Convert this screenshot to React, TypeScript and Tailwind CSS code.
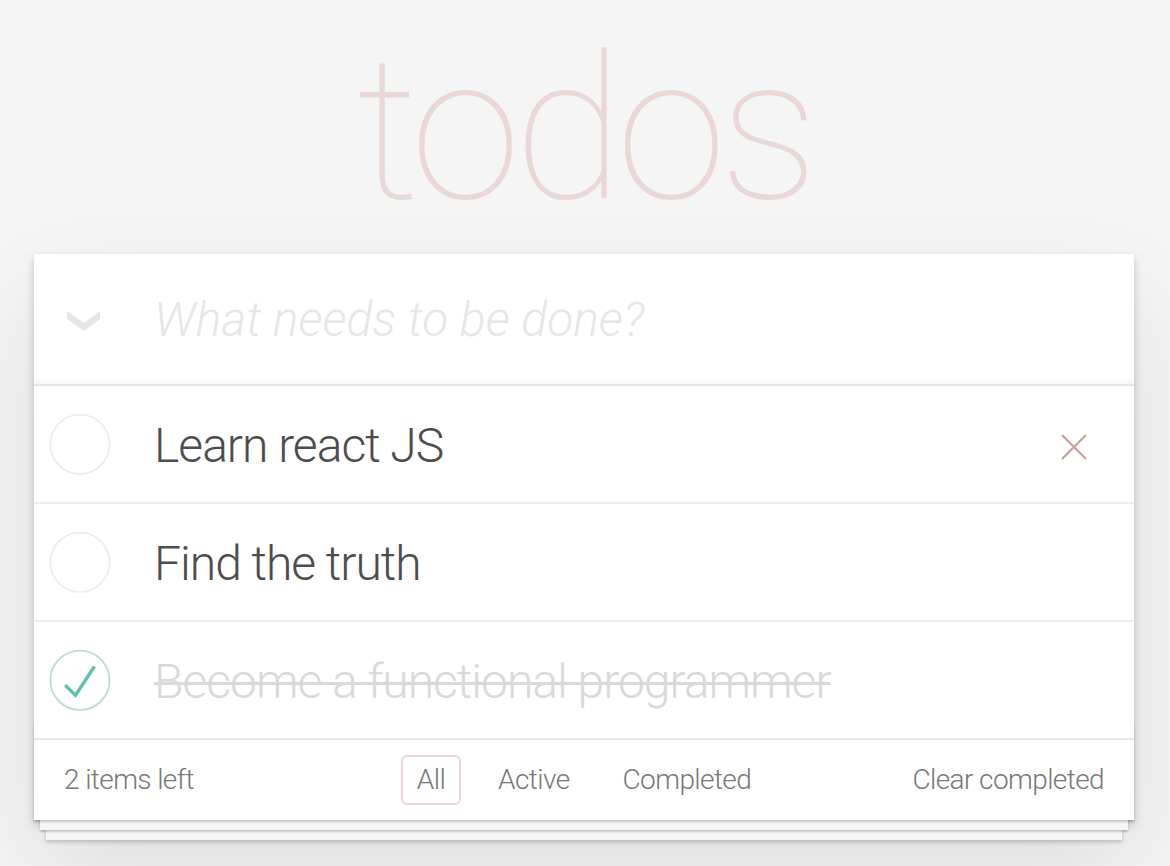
import { useState } from "react";

type Todo = { id: number; title: string; done: boolean };

const initialTodos: Todo[] = [
  { id: 1, title: "Learn react JS", done: false },
  { id: 2, title: "Find the truth", done: false },
  { id: 3, title: "Become a functional programmer", done: true },
];

// Same drawing as the classic TodoMVC toggle: circle + check mark
function Toggle({ done }: { done: boolean }) {
  return (
    <svg width="80" height="80" viewBox="-10 -18 100 135" className="shrink-0">
      <circle cx="50" cy="50" r="50" fill="none" stroke={done ? "#bddad5" : "#ededed"} strokeWidth="3" />
      {done && <path fill="#5dc2af" d="M72 25L42 71 27 56l-4 4 20 20 34-52z" />}
    </svg>
  );
}

export default function App() {
  const [todos] = useState(initialTodos);
  const left = todos.filter((t) => !t.done).length;

  return (
    <div className="min-h-screen bg-[#f5f5f5] font-['Roboto','Liberation_Sans',sans-serif] font-light text-[#4d4d4d] pt-[30px]">
      <div className="w-[1100px] ml-[34px]">
        <h1 className="h-[224px] text-center text-[200px] leading-[200px] font-thin tracking-[-7px] text-[rgba(175,47,47,0.15)]">
          todos
        </h1>

        <section className="relative bg-white shadow-[0_4px_8px_0_rgba(0,0,0,0.2),0_50px_100px_0_rgba(0,0,0,0.1)]">
          <header className="relative h-[130px] flex items-center shadow-[inset_0_-4px_2px_rgba(0,0,0,0.03)]">
            <svg width="33" height="20" viewBox="0 0 33 20" className="absolute left-[33px] top-[57px]">
              <polygon points="0,0 17,12 33,0 33,8 17,20 0,8" fill="#e6e6e6" />
            </svg>
            <input
              className="w-full h-full pl-[120px] pr-[32px] bg-transparent outline-none text-[48px] font-light placeholder:italic placeholder:text-[#e6e6e6]"
              placeholder="What needs to be done?"
            />
          </header>

          <ul className="border-t-2 border-[#e6e6e6]">
            {todos.map((t, i) => (
              <li
                key={t.id}
                className={`flex items-center ${i < todos.length - 1 ? "h-[118px] border-b-2 border-[#ededed]" : "h-[116px]"}`}
              >
                <div className="w-[120px] flex items-center">
                  <Toggle done={t.done} />
                </div>
                <label
                  className={`flex-1 pt-[4px] text-[48px] leading-[1.2] tracking-[-1px] ${t.done ? "text-[#d9d9d9] line-through decoration-[3px]" : ""}`}
                >
                  {t.title}
                </label>
                {i === 0 && (
                  <button className="w-[80px] h-[80px] mr-[20px] mt-[6px] flex items-center justify-center">
                    <svg width="26" height="26" viewBox="0 0 26 26">
                      <path d="M1 1L25 25M25 1L1 25" stroke="#cc9a9a" strokeWidth="2" />
                    </svg>
                  </button>
                )}
              </li>
            ))}
          </ul>

          <footer className="relative h-[82px] px-[30px] border-t-2 border-[#e6e6e6] grid grid-cols-[1fr_auto_1fr] items-center text-[28px] tracking-[-0.6px] text-[#777]">
            <div className="pointer-events-none absolute left-0 right-0 bottom-0 h-[100px] shadow-[0_2px_2px_rgba(0,0,0,0.2),0_16px_0_-6px_#f6f6f6,0_18px_2px_-6px_rgba(0,0,0,0.2),0_32px_0_-12px_#f6f6f6,0_34px_4px_-12px_rgba(0,0,0,0.2)]" />
            <span className="relative">{left} items left</span>
            <ul className="relative flex gap-[21px]">
              <li className="px-[14px] py-[6px] border-2 rounded-[6px] border-[rgba(175,47,47,0.2)] leading-[1.2]">All</li>
              <li className="px-[14px] py-[6px] border-2 rounded-[6px] border-transparent leading-[1.2]">Active</li>
              <li className="px-[14px] py-[6px] border-2 rounded-[6px] border-transparent leading-[1.2]">Completed</li>
            </ul>
            <button className="relative justify-self-end font-light tracking-[-0.6px]">Clear completed</button>
          </footer>
        </section>
      </div>
    </div>
  );
}
